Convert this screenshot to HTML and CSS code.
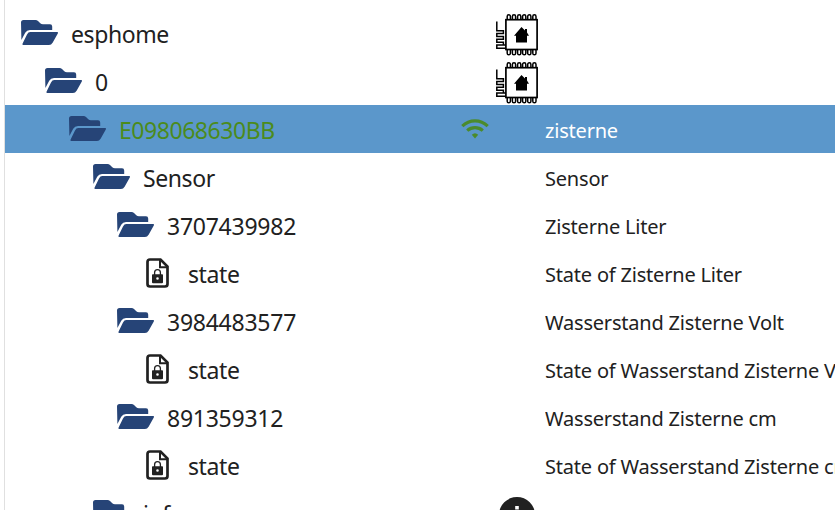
FILE: index.html
```html
<!DOCTYPE html>
<html lang="de">
<head>
	<meta charset="UTF-8">
	<title>Objects</title>
	<link rel="stylesheet" href="styles.css">
</head>
<body>
	<svg class="sprite">
		<symbol id="folder" viewBox="0 0 38 26">
			<path d="M0 2.5Q0 0 2.5 0H14.5Q16 0 17 1L19.3 3.2Q20.3 4.2 22 4.2H29Q31.2 4.2 31.2 6.5V10H9Q5.8 10 4.2 12.8L.4 20Z"/>
			<path d="M9.3 12H36.2Q37.7 12 36.8 13.5L31.6 22.8Q30.3 25 28 25H2.5Q.8 25 1.6 23.4L6 14.4Q7.2 12 9.3 12Z"/>
		</symbol>
		<symbol id="file" viewBox="0 0 24 30">
			<path d="M4 1.5H14.5L21.5 8.5V26Q21.5 28.5 19 28.5H4Q1.5 28.5 1.5 26V4Q1.5 1.5 4 1.5Z" fill="none" stroke="currentColor" stroke-width="2.7"/>
			<path d="M14 1.5V9.2H21.5" fill="none" stroke="currentColor" stroke-width="2"/>
			<path d="M8.6 17V14.5A2.9 2.9 0 0 1 14.4 14.5V17" fill="none" stroke="currentColor" stroke-width="1.3"/>
			<path fill-rule="evenodd" d="M6.8 16.2H16.2Q17 16.2 17 17V24.2Q17 25.2 16 25.2H7Q6 25.2 6 24.2V17Q6 16.2 6.8 16.2ZM11.5 19.2A1.3 1.3 0 1 0 11.5 21.8A1.3 1.3 0 1 0 11.5 19.2Z"/>
		</symbol>
		<symbol id="chip" viewBox="0 0 42 42">
			<g fill="none" stroke="#000">
				<rect x="9.9" y="5.7" width="31.2" height="29.8" stroke-width="1.7"/>
				<path stroke-width="1.5" d="M11.2 5V2.4a1.6 1.6 0 0 1 3.2 0V5M16.4 5V2.4a1.6 1.6 0 0 1 3.2 0V5M21.6 5V2.4a1.6 1.6 0 0 1 3.2 0V5M26.6 5V2.4a1.6 1.6 0 0 1 3.2 0V5M31.7 5V2.4a1.6 1.6 0 0 1 3.2 0V5M36.8 5V2.4a1.6 1.6 0 0 1 3.2 0V5"/>
				<path stroke-width="1.5" d="M11.2 36v3.2a1.6 1.6 0 0 0 3.2 0V36M16.4 36v3.2a1.6 1.6 0 0 0 3.2 0V36M21.6 36v3.2a1.6 1.6 0 0 0 3.2 0V36M26.6 36v3.2a1.6 1.6 0 0 0 3.2 0V36M31.7 36v3.2a1.6 1.6 0 0 0 3.2 0V36M36.8 36v3.2a1.6 1.6 0 0 0 3.2 0V36"/>
				<path stroke-width="1.5" d="M.8 7.5V16.7H7.4V19.5H.8V22.5H7.4V25.3H.8V28.2H7.4V31H.8V34.2H10M.8 31H10"/>
			</g>
			<path fill="#000" d="M25.5 13L29 16.4V15H31V18.4L33 21.7H31V28.5H20V21.7H18Z"/>
		</symbol>
		<symbol id="wifi" viewBox="0 0 28 20">
			<g fill="none" stroke="currentColor" stroke-width="3.2">
				<path d="M1.3 7.2C8.5 .2 19.5 .2 26.7 7.2"/>
				<path d="M6.2 11.6C10.7 7.7 17.3 7.7 21.8 11.6"/>
			</g>
			<path d="M10.8 15.8Q14 12.8 17.2 15.8L14 19.4Z"/>
		</symbol>
		<symbol id="info" viewBox="0 0 36 36">
			<path fill-rule="evenodd" d="M18 0A18 18 0 1 0 18 36A18 18 0 1 0 18 0ZM16.2 9H19.8V12.6H16.2ZM16.2 16H19.8V27H16.2Z"/>
		</symbol>
	</svg>
	<div class="tree">
		<div class="row">
			<div class="name level0"><svg class="folder"><use href="#folder"/></svg><span>esphome</span></div>
			<div class="status"><svg class="chip"><use href="#chip"/></svg></div>
			<div class="desc"></div>
		</div>
		<div class="row">
			<div class="name level1"><svg class="folder"><use href="#folder"/></svg><span>0</span></div>
			<div class="status"><svg class="chip"><use href="#chip"/></svg></div>
			<div class="desc"></div>
		</div>
		<div class="row selected">
			<div class="name level2"><svg class="folder"><use href="#folder"/></svg><span class="device">E098068630BB</span></div>
			<div class="status"><svg class="wifi"><use href="#wifi"/></svg></div>
			<div class="desc">zisterne</div>
		</div>
		<div class="row">
			<div class="name level3"><svg class="folder"><use href="#folder"/></svg><span>Sensor</span></div>
			<div class="status"></div>
			<div class="desc">Sensor</div>
		</div>
		<div class="row">
			<div class="name level4"><svg class="folder"><use href="#folder"/></svg><span class="number">3707439982</span></div>
			<div class="status"></div>
			<div class="desc">Zisterne Liter</div>
		</div>
		<div class="row">
			<div class="name level5"><svg class="file"><use href="#file"/></svg><span>state</span></div>
			<div class="status"></div>
			<div class="desc">State of Zisterne Liter</div>
		</div>
		<div class="row">
			<div class="name level4"><svg class="folder"><use href="#folder"/></svg><span class="number">3984483577</span></div>
			<div class="status"></div>
			<div class="desc">Wasserstand Zisterne Volt</div>
		</div>
		<div class="row">
			<div class="name level5"><svg class="file"><use href="#file"/></svg><span>state</span></div>
			<div class="status"></div>
			<div class="desc">State of Wasserstand Zisterne Volt</div>
		</div>
		<div class="row">
			<div class="name level4"><svg class="folder"><use href="#folder"/></svg><span class="number">891359312</span></div>
			<div class="status"></div>
			<div class="desc">Wasserstand Zisterne cm</div>
		</div>
		<div class="row">
			<div class="name level5"><svg class="file"><use href="#file"/></svg><span>state</span></div>
			<div class="status"></div>
			<div class="desc">State of Wasserstand Zisterne cm</div>
		</div>
		<div class="row">
			<div class="name level3"><svg class="folder"><use href="#folder"/></svg><span>info</span></div>
			<div class="status"><svg class="info"><use href="#info"/></svg></div>
			<div class="desc"></div>
		</div>
	</div>
</body>
</html>
```
FILE: styles.css
```css
*{
	margin: 0;
	padding: 0;
	box-sizing: border-box;
}
body{
	height: 510px;
	overflow: hidden;
	background-color: #fff;
	color: #212121;
	font-family: "Noto Sans", "Open Sans", sans-serif;
}
.sprite{
	display: none;
}
svg{
	display: block;
	flex: none;
	fill: currentColor;
}
.tree{
	height: 510px;
	margin-left: 4px;
	padding-top: 9px;
	border-left: 1px solid #e0e0e0;
	overflow: hidden;
}
.row{
	display: grid;
	grid-template-columns: 456px 84px 1fr;
	align-items: center;
	height: 48px;
	white-space: nowrap;
}
.name{
	display: flex;
	align-items: center;
	gap: 12px;
	height: 48px;
	font-size: 23px;
	line-height: 46px;
	letter-spacing: -0.4px;
}
.name span{
	padding-top: 2px;
}
.level0{ padding-left: 16px; }
.level1{ padding-left: 40px; }
.level2{ padding-left: 64px; }
.level3{ padding-left: 88px; }
.level4{ padding-left: 112px; }
.level5{
	padding-left: 141px;
	gap: 18px;
}
.folder{
	width: 38px;
	height: 26px;
	color: #264477;
}
.file{
	width: 24px;
	height: 30px;
	margin-top: -1px;
}
.name .number{
	letter-spacing: -0.25px;
}
.name .device{
	color: #4b8b1c;
	letter-spacing: -0.45px;
}
.status{
	display: flex;
}
.chip{
	width: 42px;
	height: 42px;
	margin-left: 35px;
	margin-top: 3px;
}
.wifi{
	width: 28px;
	height: 20px;
	color: #4b8b2c;
}
.info{
	width: 36px;
	height: 36px;
	margin-left: 38px;
	margin-top: 4px;
}
.desc{
	height: 48px;
	padding-top: 4px;
	overflow: hidden;
	font-size: 20px;
	line-height: 44px;
	letter-spacing: -0.2px;
}
.selected{
	background-color: #5b97cb;
}
.selected .desc{
	color: #fff;
}
```
